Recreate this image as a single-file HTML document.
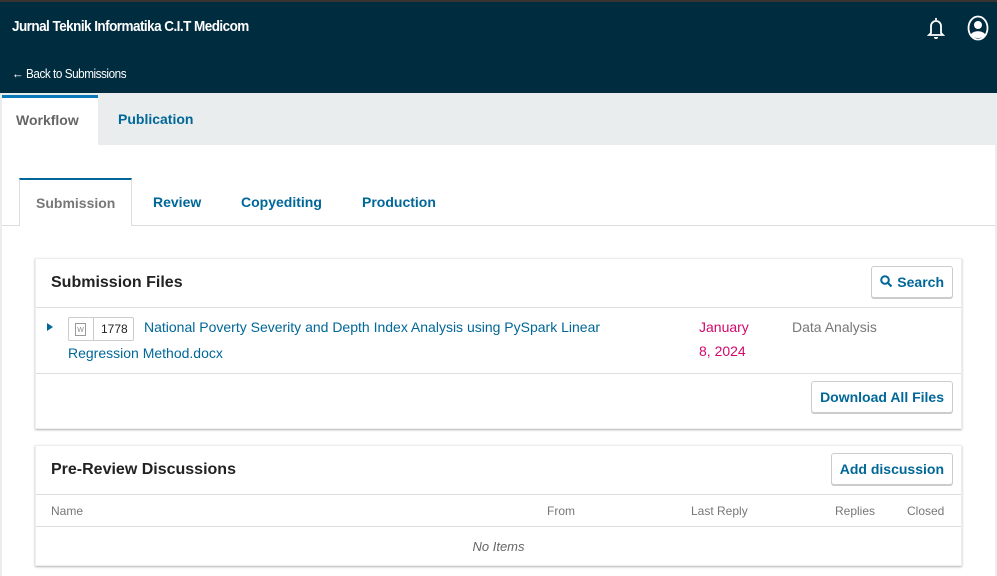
<!DOCTYPE html>
<html><head><meta charset="utf-8"><style>
*{box-sizing:border-box;margin:0;padding:0}
body{width:997px;height:576px;overflow:hidden;background:#eaedee;font-family:"Liberation Sans",sans-serif;position:relative}
.hdr{position:absolute;left:0;top:0;width:997px;height:93px;background:#002c40;border-top:2px solid #3a3330}
.t{position:absolute;color:#fff;font-weight:bold;font-size:15px;left:12px;top:16px;letter-spacing:-0.6px;transform:scaleX(.9);transform-origin:left}
.back{position:absolute;color:#fff;font-size:13px;left:12px;top:64px;letter-spacing:-0.5px;transform:scaleX(.9);transform-origin:left}
.abs{position:absolute}
.wf{left:2px;top:95px;width:96px;height:52px;background:#fff;border-top:3px solid #0a7ab8;font-weight:bold;font-size:14px;color:#666;padding:14px 0 0 14px}
.pub{left:118px;top:111px;font-weight:bold;font-size:14px;color:#006798}
.main{left:2px;top:145px;width:993px;height:431px;background:#fff}
.stabs{left:2px;top:225px;width:993px;border-top:1px solid #ddd}
.sub{left:19px;top:178px;width:113px;height:48px;background:#fff;border:1px solid #ddd;border-top:2px solid #006798;border-bottom:none;font-weight:bold;font-size:14px;color:#777;padding:15px 0 0 16px}
.tb{font-weight:bold;font-size:14px;color:#006798;top:194px}
.panel{position:absolute;left:35px;width:927px;background:#fff;box-shadow:0 1px 2px rgba(0,0,0,.3);border:1px solid #eee}
.ph{font-weight:bold;font-size:16px;color:#222}
.btn{position:absolute;border:1px solid #ccc;border-radius:3px;box-shadow:0 1px 0 #ccc;background:#fff;color:#006798;font-weight:bold;font-size:14px;padding:7px 8px}
.line{position:absolute;left:0;width:100%;border-top:1px solid #ddd}
.lnk{color:#006798;font-size:14px}
.hd{font-size:12px;color:#777;position:absolute;top:16px}
</style></head><body>
<div class="hdr">
<div class="t">Jurnal Teknik Informatika C.I.T Medicom</div>
<div class="back">← Back to Submissions</div>
<svg class="abs" style="left:926px;top:14px" width="20" height="24" viewBox="0 0 20 24"><path d="M10 2v2M5 17V10a5 5 0 0 1 10 0v7l2 2H3z" fill="none" stroke="#fff" stroke-width="1.8"/><path d="M8 21a2 2 0 0 0 4 0" fill="#fff"/></svg>
<svg class="abs" style="left:967px;top:13px" width="22" height="26" viewBox="0 0 22 26"><ellipse cx="11" cy="13" rx="9.5" ry="11.5" fill="none" stroke="#fff" stroke-width="1.8"/><circle cx="11" cy="10" r="4" fill="#fff"/><path d="M3.5 20c2-5 13-5 15 0c-3 4-12 4-15 0z" fill="#fff"/></svg>
</div>
<div class="abs wf">Workflow</div>
<div class="abs pub">Publication</div>
<div class="abs main"></div>
<div class="abs stabs"></div>
<div class="abs sub">Submission</div>
<div class="abs tb" style="left:153px">Review</div>
<div class="abs tb" style="left:241px">Copyediting</div>
<div class="abs tb" style="left:362px">Production</div>

<div class="panel" style="top:258px;height:171px">
<div class="abs ph" style="left:15px;top:15px">Submission Files</div>
<div class="btn" style="right:8px;top:7px"><svg width="13" height="13" viewBox="0 0 13 13" style="vertical-align:-1px;margin-right:4px"><circle cx="5" cy="5" r="3.8" fill="none" stroke="#006798" stroke-width="2"/><path d="M8 8l3.5 3.5" stroke="#006798" stroke-width="2.2"/></svg>Search</div>
<div class="line" style="top:48px"></div>
<div class="abs" style="left:11px;top:64px;width:0;height:0;border-left:6px solid #006798;border-top:4px solid transparent;border-bottom:4px solid transparent"></div>
<div class="abs" style="left:32px;top:58px;width:66px;height:24px;border:1px solid #ccc;border-radius:2px;font-size:12px;color:#222"><span style="position:absolute;left:6px;top:5px;width:11px;height:13px;border:1px solid #999;font-size:7px;color:#888;text-align:center;line-height:14px">W</span><span style="position:absolute;left:24px;top:0;height:22px;border-left:1px solid #ccc"></span><span style="position:absolute;left:32px;top:4px">1778</span></div>
<div class="abs lnk" style="left:108px;top:60px">National Poverty Severity and Depth Index Analysis using PySpark Linear</div>
<div class="abs lnk" style="left:32px;top:86px">Regression Method.docx</div>
<div class="abs" style="left:663px;top:56px;font-size:14px;color:#d00a6c;line-height:24px">January<br>8, 2024</div>
<div class="abs" style="left:756px;top:60px;font-size:14px;color:#777">Data Analysis</div>
<div class="line" style="top:114px"></div>
<div class="btn" style="right:8px;top:122px">Download All Files</div>
</div>

<div class="panel" style="top:445px;height:121px">
<div class="abs ph" style="left:15px;top:15px">Pre-Review Discussions</div>
<div class="btn" style="right:8px;top:7px">Add discussion</div>
<div class="line" style="top:48px"></div>
<div class="hd" style="left:15px;top:58px">Name</div>
<div class="hd" style="left:511px;top:58px">From</div>
<div class="hd" style="left:655px;top:58px">Last Reply</div>
<div class="hd" style="left:799px;top:58px">Replies</div>
<div class="hd" style="left:871px;top:58px">Closed</div>
<div class="line" style="top:80px"></div>
<div class="abs" style="left:0;width:100%;top:93px;text-align:center;font-style:italic;font-size:13px;color:#666">No Items</div>
</div>
</body></html>
